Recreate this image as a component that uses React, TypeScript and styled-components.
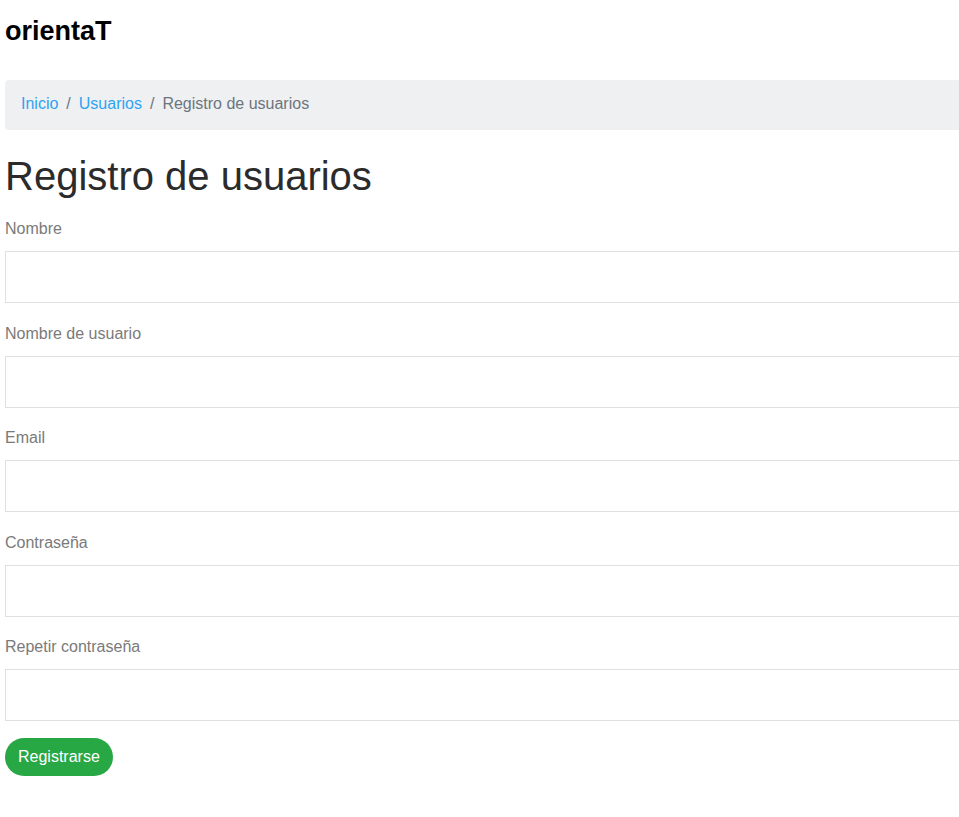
import React from "react";
import styled, { createGlobalStyle } from "styled-components";

const Global = createGlobalStyle`
  html, body { margin: 0; padding: 0; background: #fff; overflow-x: hidden; }
  body { font-family: "Liberation Sans", Arial, sans-serif; }
`;

const Page = styled.div`
  width: 1000px;
  padding: 0 0 40px 5px;
  display: flex;
  flex-direction: column;
`;

const Brand = styled.div`
  font-size: 27px;
  font-weight: 700;
  color: #000;
  height: 62px;
  line-height: 62px;
  margin-bottom: 18px;
`;

const Crumbs = styled.nav`
  box-sizing: border-box;
  background: #eff0f2;
  border-radius: 4px;
  height: 50px;
  display: flex;
  align-items: center;
  padding: 0 16px 2px;
  font-size: 16px;
  color: #6c757d;
`;

const CrumbLink = styled.a`
  color: #2ea3f2;
  text-decoration: none;
`;

const Sep = styled.span`
  padding: 0 8px;
  color: #6c757d;
`;

const Title = styled.h1`
  margin: 22px 0 0;
  font-size: 40px;
  font-weight: 400;
  line-height: 48px;
  color: #2b2b2b;
`;

const Form = styled.form`
  display: flex;
  flex-direction: column;
  margin-top: 17px;
`;

const Group = styled.div`
  display: flex;
  flex-direction: column;
  margin-bottom: 18.5px;
`;

const Label = styled.label`
  font-size: 16px;
  line-height: 24px;
  color: #7a7a7a;
  margin-bottom: 10px;
`;

const Input = styled.input`
  box-sizing: border-box;
  height: 52px;
  border: 1px solid #e0e0e0;
  border-radius: 0;
  background: #fff;
  font-size: 16px;
  padding: 0 12px;
`;

const Button = styled.button`
  align-self: flex-start;
  height: 38px;
  padding: 0 13px;
  margin-top: -2px;
  border: none;
  border-radius: 19px;
  background: #28a745;
  color: #fff;
  font-family: "Liberation Sans", Arial, sans-serif;
  font-size: 16px;
`;

const fields = [
  { label: "Nombre", type: "text" },
  { label: "Nombre de usuario", type: "text" },
  { label: "Email", type: "email" },
  { label: "Contraseña", type: "password" },
  { label: "Repetir contraseña", type: "password" },
];

export default function App() {
  return (
    <>
      <Global />
      <Page>
        <Brand>orientaT</Brand>
        <Crumbs>
          <CrumbLink href="#">Inicio</CrumbLink>
          <Sep>/</Sep>
          <CrumbLink href="#">Usuarios</CrumbLink>
          <Sep>/</Sep>
          <span>Registro de usuarios</span>
        </Crumbs>
        <Title>Registro de usuarios</Title>
        <Form onSubmit={(e) => e.preventDefault()}>
          {fields.map((f) => (
            <Group key={f.label}>
              <Label>{f.label}</Label>
              <Input type={f.type} />
            </Group>
          ))}
          <Button type="submit">Registrarse</Button>
        </Form>
      </Page>
    </>
  );
}
